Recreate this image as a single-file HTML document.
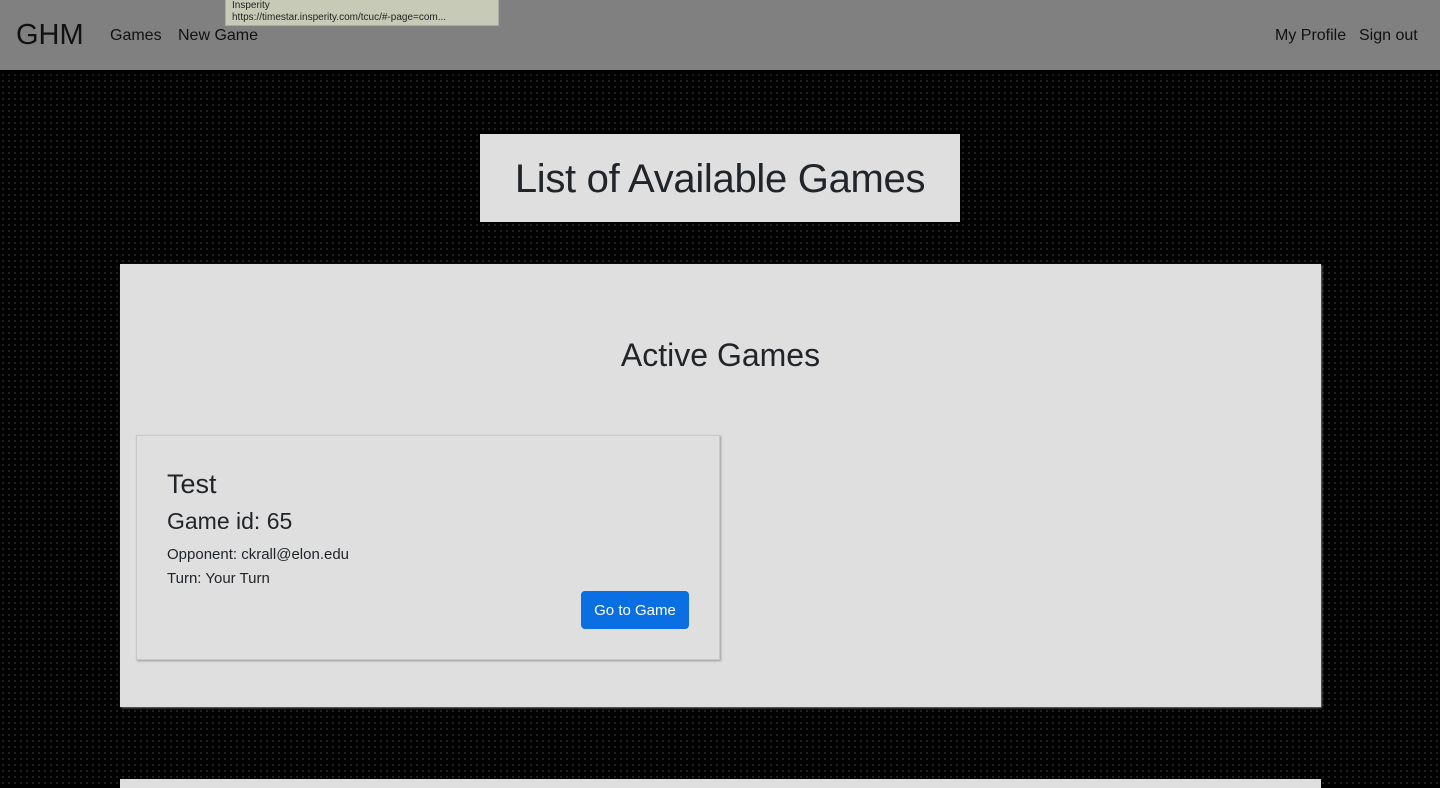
<!DOCTYPE html>
<html><head><meta charset="utf-8"><style>
*{box-sizing:border-box;margin:0;padding:0}
html,body{width:1440px;height:788px;overflow:hidden}
body{font-family:"Liberation Sans",sans-serif;color:#212529;background:#000;background-image:radial-gradient(circle,#2a2a2a 0.8px,transparent 1px);background-size:6px 6px;position:relative}
.nav{position:absolute;left:0;top:0;width:1440px;height:70px;background:#808080;box-shadow:0 2px 6px rgba(0,0,0,.8);z-index:2}
.nav a{position:absolute;color:#111;font-size:16px;top:27px;text-decoration:none}
.brand{position:absolute;left:16px;top:19px;font-size:29px;color:#111}
.tip{position:absolute;left:225px;top:0;width:274px;height:26px;background:#c8cab8;font-size:10px;line-height:12px;padding:0 6px;color:#222;z-index:3;border:1px solid #aaa;border-top:none}
.title{position:absolute;left:480px;top:134px;width:480px;height:88px;background:#dfdfdf;font-size:40px;text-align:center;line-height:90px;letter-spacing:-0.3px}
.panel{position:absolute;left:120px;top:264px;width:1201px;height:443px;background:#dfdfdf;box-shadow:1px 1px 2px #777}
.panel h2{position:absolute;top:73px;width:100%;text-align:center;font-size:32px;font-weight:normal}
.card{position:absolute;left:16px;top:171px;width:584px;height:225px;border:1px solid #c8c8c8;box-shadow:1px 1px 2px #999;background:#dfdfdf}
.card .t{position:absolute;left:30px;top:33px;font-size:27px}
.card .g{position:absolute;left:30px;top:72px;font-size:23px}
.card .o{position:absolute;left:30px;top:107px;font-size:15px;line-height:24px}
.btn{position:absolute;left:444px;top:155px;width:108px;height:38px;background:#0a6fe2;color:#fff;border-radius:4px;font-size:15px;text-align:center;line-height:39px}
.panel2{position:absolute;left:120px;top:779px;width:1201px;height:20px;background:#dfdfdf}
</style></head><body>
<div class="nav"><span class="brand">GHM</span><a style="left:110px">Games</a><a style="left:178px">New Game</a><a style="left:1275px">My Profile</a><a style="left:1359px">Sign out</a></div>
<div class="tip">Insperity<br>https://timestar.insperity.com/tcuc/#-page=com...</div>
<div class="title">List of Available Games</div>
<div class="panel"><h2>Active Games</h2>
<div class="card"><div class="t">Test</div><div class="g">Game id: 65</div><div class="o">Opponent: ckrall@elon.edu<br>Turn: Your Turn</div><div class="btn">Go to Game</div></div>
</div>
<div class="panel2"></div>
</body></html>
